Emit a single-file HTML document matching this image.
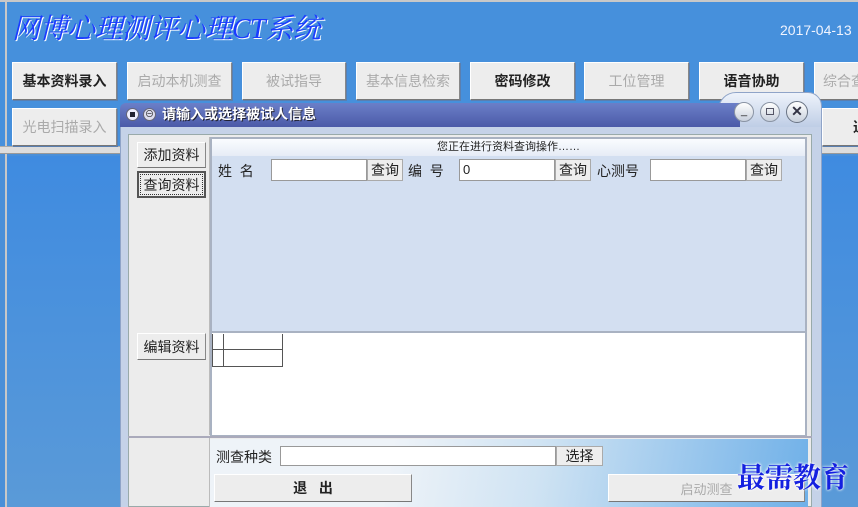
<!DOCTYPE html>
<html><head><meta charset="utf-8"><style>
*{margin:0;padding:0;box-sizing:border-box}
body{width:858px;height:507px;overflow:hidden;position:relative;background:#4a8fd8;font-family:"Liberation Sans","Noto Sans CJK SC",sans-serif;font-size:13px;color:#222}
.a{position:absolute}
.btn{position:absolute;background:#ededed;border:1px solid #fff;border-right-color:#888;border-bottom-color:#777;display:flex;align-items:center;justify-content:center;font-size:14px;box-shadow:1px 1px 0 #5a7fb0}
.dis{color:#aaa}
.b{font-weight:bold;color:#222}
.tb{position:absolute;height:22px;background:#fff;border:1px solid #999;font-size:13px;padding-left:3px;line-height:20px}
.sb{position:absolute;height:22px;background:#eee;border:1px solid #aaa;display:flex;align-items:center;justify-content:center;font-size:14px}
</style></head><body>
<div class="a" style="left:0;top:0;width:858px;height:150px;background:#4690dc"></div>
<div class="a" style="left:5px;top:0;width:2px;height:150px;background:#c8c8c8"></div>
<div class="a" style="left:0;top:0;width:858px;height:2px;background:#c8c8c8"></div>
<div class="a" style="left:0;top:146px;width:858px;height:8px;background:#ddd;border-top:1px solid #aaa;border-bottom:1px solid #999"></div>
<div class="a" style="left:5px;top:154px;width:2px;height:353px;background:#c8c8c8"></div>
<div class="a" style="left:7px;top:156px;width:851px;height:351px;background:linear-gradient(#3f8be0,#5a9ad8)"></div>
<div class="a" style="left:12px;top:7px;font-family:'Liberation Serif','Noto Serif CJK SC',serif;font-style:italic;font-size:28px;color:#1a3cff;text-shadow:1px 1px 0 #fff;letter-spacing:-0.5px">网博心理测评心理CT系统</div>
<div class="a" style="left:780px;top:22px;color:#f0f4ff;font-size:14px">2017-04-13</div>

<div class="btn b" style="left:12px;top:62px;width:105px;height:38px">基本资料录入</div>
<div class="btn dis" style="left:127px;top:62px;width:105px;height:38px">启动本机测查</div>
<div class="btn dis" style="left:242px;top:62px;width:104px;height:38px">被试指导</div>
<div class="btn dis" style="left:356px;top:62px;width:104px;height:38px">基本信息检索</div>
<div class="btn b" style="left:470px;top:62px;width:105px;height:38px">密码修改</div>
<div class="btn dis" style="left:584px;top:62px;width:105px;height:38px">工位管理</div>
<div class="btn b" style="left:699px;top:62px;width:105px;height:38px">语音协助</div>
<div class="btn dis" style="left:814px;top:62px;width:60px;height:38px;justify-content:flex-start;padding-left:8px">综合查</div>
<div class="btn dis" style="left:12px;top:108px;width:105px;height:38px">光电扫描录入</div>
<div class="btn b" style="left:822px;top:108px;width:50px;height:38px;justify-content:flex-start;padding-left:30px">退</div>

<!-- dialog -->
<div class="a" style="left:718px;top:92px;width:104px;height:40px;background:linear-gradient(#eef3fb,#b9c9e3);border-radius:18px 14px 0 0;border:1px solid #8fa4c8"></div>
<div class="a" style="left:120px;top:103px;width:620px;height:24px;background:linear-gradient(#6b7fc8,#4b5aa8);border-radius:6px 0 0 0"></div>
<div class="a" style="left:126px;top:108px;width:13px;height:13px;border-radius:50%;background:#eef;border:1px solid #667"></div>
<div class="a" style="left:130px;top:112px;width:5px;height:5px;background:#223"></div>
<div class="a" style="left:143px;top:108px;width:13px;height:13px;border-radius:50%;background:#dde;border:1px solid #667;font-size:9px;line-height:11px;text-align:center">⊖</div>
<div class="a" style="left:162px;top:104px;color:#fff;font-size:14px;font-weight:bold;text-shadow:1px 1px 0 #223">请输入或选择被试人信息</div>
<div class="a" style="left:734px;top:102px;width:20px;height:20px;border-radius:50%;background:linear-gradient(#fff,#c8d0dc);border:1px solid #8a94a4;font-size:11px;text-align:center;line-height:16px">_</div>
<div class="a" style="left:760px;top:102px;width:20px;height:20px;border-radius:50%;background:linear-gradient(#fff,#c8d0dc);border:1px solid #8a94a4"></div>
<div class="a" style="left:766px;top:108px;width:8px;height:7px;border:1px solid #556"></div>
<div class="a" style="left:786px;top:101px;width:22px;height:22px;border-radius:50%;background:linear-gradient(#fff,#c8d0dc);border:1px solid #6a7484;font-size:14px;font-weight:bold;text-align:center;line-height:19px;color:#334">✕</div>
<div class="a" style="left:120px;top:127px;width:702px;height:380px;background:#c5d2e8;border-left:1px solid #8fa4c8;border-right:1px solid #8fa4c8"></div>
<div class="a" style="left:128px;top:134px;width:684px;height:373px;background:#ececec;border:1px solid #9aa"></div>
<div class="a" style="left:132px;top:137px;width:78px;height:298px;border-right:1px solid #bbb"></div>
<div class="btn" style="left:137px;top:142px;width:69px;height:26px;box-shadow:none">添加资料</div>
<div class="btn" style="left:137px;top:171px;width:69px;height:27px;box-shadow:none;border:2px solid #555;outline:1px dotted #333;outline-offset:-4px">查询资料</div>
<div class="btn" style="left:137px;top:333px;width:69px;height:27px;box-shadow:none">编辑资料</div>
<div class="a" style="left:210px;top:137px;width:597px;height:300px;border:2px solid #a9b2c2;background:#fff"></div>
<div class="a" style="left:212px;top:139px;width:593px;height:17px;background:linear-gradient(#fafcff,#e6ecf6);font-size:11px;text-align:center;line-height:17px">您正在进行资料查询操作……</div>
<div class="a" style="left:212px;top:156px;width:593px;height:177px;background:#d3dff1;border-bottom:2px solid #a9b2c2"></div>
<div class="a" style="left:218px;top:161px;font-size:14px">姓 &nbsp;名</div>
<div class="tb" style="left:271px;top:159px;width:96px"></div>
<div class="sb" style="left:367px;top:159px;width:36px">查询</div>
<div class="a" style="left:408px;top:161px;font-size:14px">编 &nbsp;号</div>
<div class="tb" style="left:459px;top:159px;width:96px">0</div>
<div class="sb" style="left:555px;top:159px;width:36px">查询</div>
<div class="a" style="left:597px;top:161px;font-size:14px">心测号</div>
<div class="tb" style="left:650px;top:159px;width:96px"></div>
<div class="sb" style="left:746px;top:159px;width:36px">查询</div>
<div class="a" style="left:212px;top:334px;width:71px;height:33px;border:1px solid #555;border-top:none"></div>
<div class="a" style="left:212px;top:349px;width:71px;height:1px;background:#555"></div>
<div class="a" style="left:223px;top:334px;width:1px;height:33px;background:#555"></div>
<div class="a" style="left:128px;top:436px;width:684px;height:2px;background:#aab"></div>
<div class="a" style="left:132px;top:438px;width:78px;height:69px;border-right:1px solid #bbb"></div>
<div class="a" style="left:210px;top:439px;width:598px;height:68px;background:linear-gradient(100deg,#eef3f8 30%,#cfe3f3 55%,#6fb0e8 100%)"></div>
<div class="a" style="left:216px;top:447px;font-size:14px">测查种类</div>
<div class="tb" style="left:280px;top:446px;width:276px;height:20px"></div>
<div class="sb" style="left:556px;top:446px;width:47px;height:20px">选择</div>
<div class="btn b" style="left:214px;top:474px;width:198px;height:28px;box-shadow:none;font-weight:bold">退 &nbsp;&nbsp;出</div>
<div class="btn dis" style="left:608px;top:474px;width:197px;height:28px;box-shadow:none;font-size:13px">启动测查</div>
<div class="a" style="left:737px;top:456px;font-family:'Noto Serif CJK SC',serif;font-weight:bold;font-size:28px;color:#1420e0;text-shadow:0 0 2px #fff,0 0 3px #fff">最需教育</div>
</body></html>
